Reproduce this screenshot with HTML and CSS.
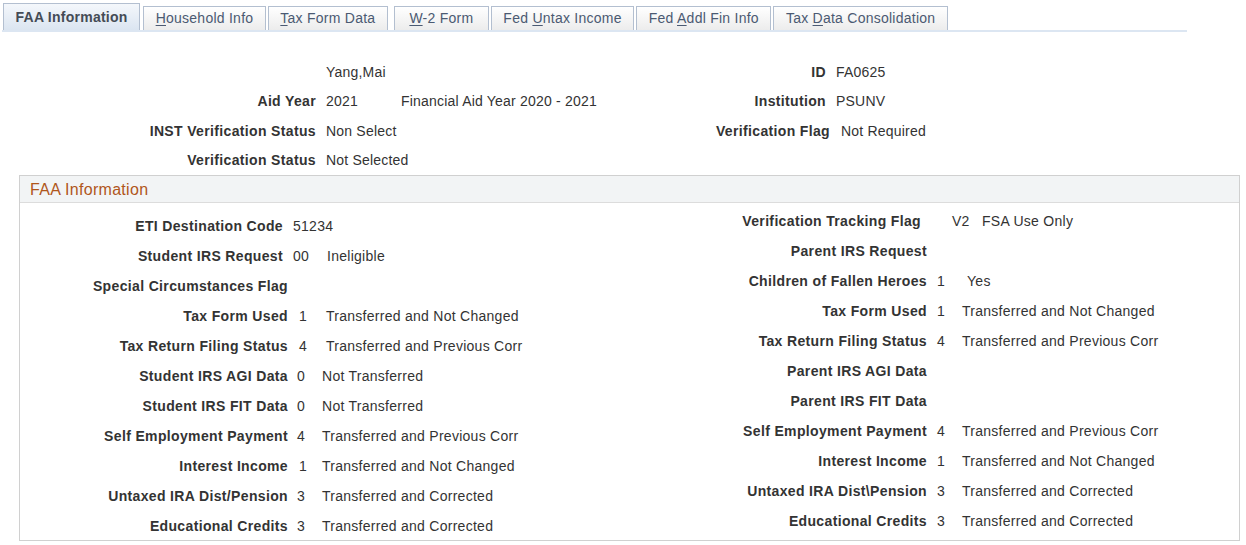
FILE: index.html
```html
<!DOCTYPE html>
<html>
<head>
<meta charset="utf-8">
<title>FAA Information</title>
<link rel="stylesheet" href="styles.css">
</head>
<body>
<div class="tabs">
  <div class="tab active">FAA Information</div>
  <div class="tab"><u>H</u>ousehold Info</div>
  <div class="tab"><u>T</u>ax Form Data</div>
  <div class="tab w2"><u>W</u>-2 Form</div>
  <div class="tab">Fed <u>U</u>ntax Income</div>
  <div class="tab">Fed <u>A</u>ddl Fin Info</div>
  <div class="tab">Tax <u>D</u>ata Consolidation</div>
</div>

<div class="hdr">
  <div class="hcol left">
    <div class="hrow"><span class="lbl"></span><span class="val">Yang,Mai</span></div>
    <div class="hrow"><span class="lbl">Aid Year</span><span class="val"><span class="yr">2021</span>Financial Aid Year 2020 - 2021</span></div>
    <div class="hrow"><span class="lbl">INST Verification Status</span><span class="val">Non Select</span></div>
    <div class="hrow"><span class="lbl">Verification Status</span><span class="val">Not Selected</span></div>
  </div>
  <div class="hcol right">
    <div class="hrow"><span class="lbl">ID</span><span class="val">FA0625</span></div>
    <div class="hrow"><span class="lbl">Institution</span><span class="val">PSUNV</span></div>
    <div class="hrow shift"><span class="lbl">Verification Flag</span><span class="val">Not Required</span></div>
  </div>
</div>

<div class="box">
  <div class="box-head">FAA Information</div>
  <div class="box-body">
    <div class="col lcol">
      <div class="row narrow"><span class="lbl">ETI Destination Code</span><span class="code">51234</span></div>
      <div class="row narrow"><span class="lbl">Student IRS Request</span><span class="code c34">00</span><span class="desc">Ineligible</span></div>
      <div class="row"><span class="lbl">Special Circumstances Flag</span></div>
      <div class="row"><span class="lbl">Tax Form Used</span><span class="code c29 pl">1</span><span class="desc">Transferred and Not Changed</span></div>
      <div class="row"><span class="lbl">Tax Return Filing Status</span><span class="code c29 pl">4</span><span class="desc">Transferred and Previous Corr</span></div>
      <div class="row"><span class="lbl">Student IRS AGI Data</span><span class="code">0</span><span class="desc">Not Transferred</span></div>
      <div class="row"><span class="lbl">Student IRS FIT Data</span><span class="code">0</span><span class="desc">Not Transferred</span></div>
      <div class="row"><span class="lbl">Self Employment Payment</span><span class="code">4</span><span class="desc">Transferred and Previous Corr</span></div>
      <div class="row"><span class="lbl">Interest Income</span><span class="code pl">1</span><span class="desc">Transferred and Not Changed</span></div>
      <div class="row"><span class="lbl">Untaxed IRA Dist/Pension</span><span class="code">3</span><span class="desc">Transferred and Corrected</span></div>
      <div class="row"><span class="lbl">Educational Credits</span><span class="code">3</span><span class="desc">Transferred and Corrected</span></div>
    </div>
    <div class="col rcol">
      <div class="row tracking"><span class="lbl">Verification Tracking Flag</span><span class="code c30">V2</span><span class="desc">FSA Use Only</span></div>
      <div class="row"><span class="lbl">Parent IRS Request</span></div>
      <div class="row"><span class="lbl">Children of Fallen Heroes</span><span class="code c30">1</span><span class="desc">Yes</span></div>
      <div class="row"><span class="lbl">Tax Form Used</span><span class="code">1</span><span class="desc">Transferred and Not Changed</span></div>
      <div class="row"><span class="lbl">Tax Return Filing Status</span><span class="code">4</span><span class="desc">Transferred and Previous Corr</span></div>
      <div class="row"><span class="lbl">Parent IRS AGI Data</span></div>
      <div class="row"><span class="lbl">Parent IRS FIT Data</span></div>
      <div class="row"><span class="lbl">Self Employment Payment</span><span class="code">4</span><span class="desc">Transferred and Previous Corr</span></div>
      <div class="row"><span class="lbl">Interest Income</span><span class="code">1</span><span class="desc">Transferred and Not Changed</span></div>
      <div class="row"><span class="lbl">Untaxed IRA Dist\Pension</span><span class="code">3</span><span class="desc">Transferred and Corrected</span></div>
      <div class="row"><span class="lbl">Educational Credits</span><span class="code">3</span><span class="desc">Transferred and Corrected</span></div>
    </div>
  </div>
</div>
</body>
</html>
```

FILE: styles.css
```css
* { box-sizing: border-box; }

body {
  margin: 0;
  font-family: "Liberation Sans", Arial, sans-serif;
  font-size: 14px;
  letter-spacing: 0.27px;
  color: #333333;
  background: #ffffff;
}

/* Tabs */
.tabs {
  display: flex;
  align-items: flex-end;
  gap: 2px;
  width: 1185px;
  margin-left: 2px;
  padding-left: 1px;
  padding-top: 3px;
  border-bottom: 2px solid #dce6f2;
}

.tab {
  height: 24px;
  line-height: 22px;
  padding: 0 11.5px;
  border: 1px solid #b3bfd0;
  border-bottom: none;
  background: linear-gradient(#ffffff, #ececec);
  color: #4b5a72;
  white-space: nowrap;
  letter-spacing: 0.25px;
}

.tab.w2 { margin-left: 4px; padding: 0 14.5px; }

.tab u { text-decoration-thickness: 1px; text-underline-offset: 2px; }

.tab.active {
  height: 27px;
  line-height: 26px;
  padding: 0 11.5px;
  margin-right: 1px;
  font-weight: bold;
  color: #444b55;
  background: linear-gradient(#f4f7fb, #dbe5f1);
  border-color: #b3bfd0;
}

/* Header fields */
.hdr {
  display: flex;
  margin-top: 25px;
}

.hcol { display: flex; flex-direction: column; }
.hcol.left { width: 620px; }

.hrow {
  display: grid;
  column-gap: 10px;
  height: 29.5px;
  align-items: center;
}

.left .hrow { grid-template-columns: 316px auto; }
.right .hrow { grid-template-columns: 206px auto; }
.right .hrow.shift { grid-template-columns: 210px auto; column-gap: 11px; }

.lbl {
  font-weight: bold;
  text-align: right;
  white-space: nowrap;
  letter-spacing: 0.35px;
}

.val { white-space: nowrap; letter-spacing: 0.2px; }

.yr { display: inline-block; width: 75px; }

/* Group box */
.box {
  margin-left: 19px;
  width: 1221px;
  height: 366px;
  border: 1px solid #d0d0d0;
}

.box-head {
  height: 27px;
  line-height: 27px;
  padding-left: 10px;
  font-size: 16px;
  letter-spacing: 0.3px;
  color: #b0561b;
  background: #f2f4f5;
  border-bottom: 1px solid #dcdcdc;
}

.box-body {
  display: flex;
}

.col { display: flex; flex-direction: column; }

.lcol { width: 600px; padding-top: 8px; }
.rcol { padding-top: 3px; }

.row {
  display: flex;
  align-items: center;
  height: 30px;
  white-space: nowrap;
}

.row .lbl { flex: none; }
.lcol .lbl { width: 268px; margin-right: 9px; }
.lcol .row.narrow .lbl { width: 263px; margin-right: 10px; }
.rcol .lbl { width: 307px; margin-right: 10px; }
.rcol .row.tracking .lbl { width: 301px; margin-right: 31px; }

.code { display: inline-block; width: 25px; }
.code.pl { padding-left: 2px; }
.code.c29 { width: 29px; }
.code.c30 { width: 30px; }
.code.c34 { width: 34px; }
```
